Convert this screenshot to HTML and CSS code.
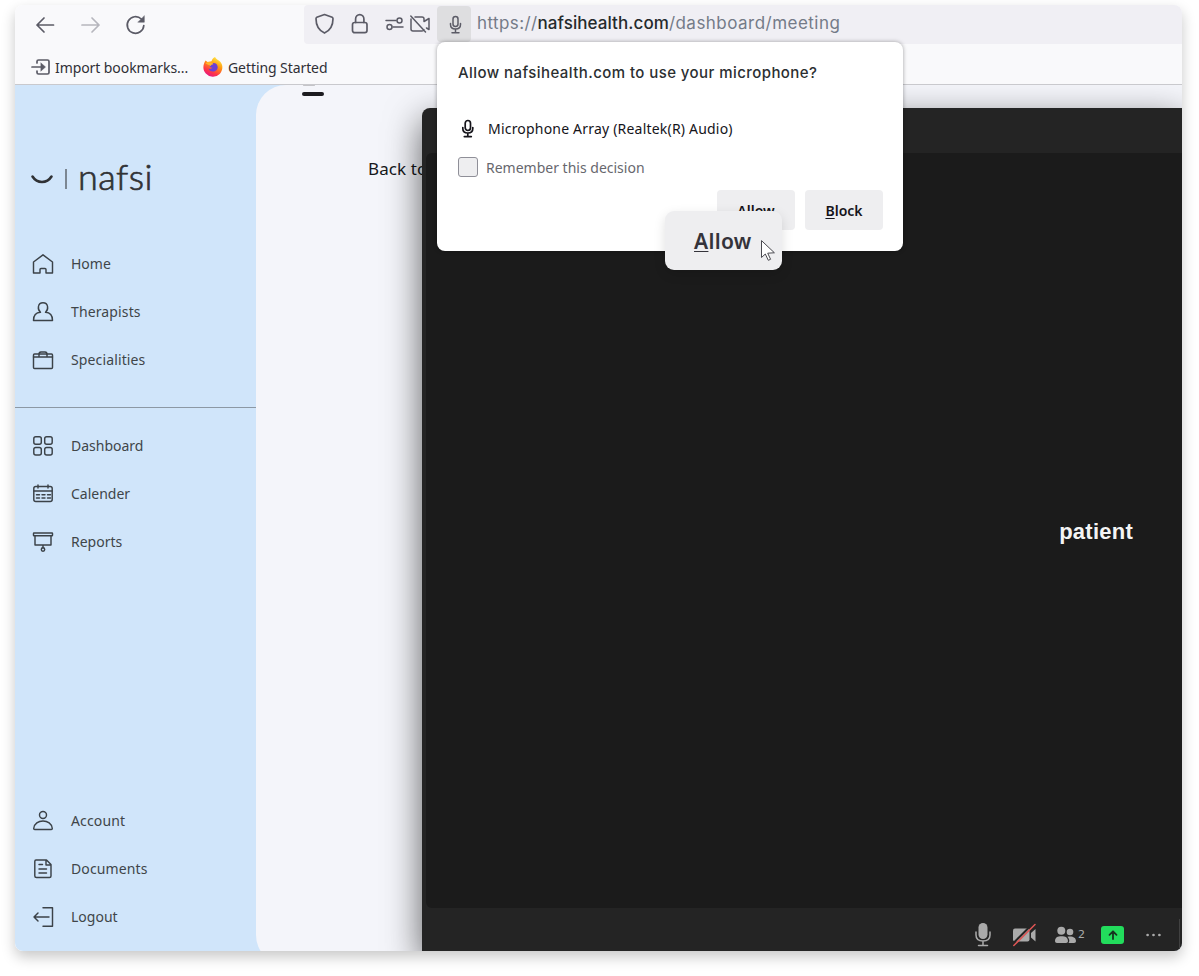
FILE: index.html
```html
<!DOCTYPE html>
<html lang="en">
<head>
<meta charset="utf-8">
<title>Nafsi – Meeting</title>
<link rel="stylesheet" href="styles.css">
</head>
<body>
<div class="window">
  <header class="navbar">
    <div class="nav-buttons">
      <svg width="20" height="20" viewBox="0 0 20 20"><path d="M18.500 10H2M9 3L2 10l7 7" /></svg>
      <svg class="disabled" width="20" height="20" viewBox="0 0 20 20"><path d="M2 10h17M12 3l7 7-7 7" /></svg>
      <svg width="20" height="20" viewBox="0 0 20 20"><path d="M18.800 10.500A8.300 8.300 0 1 1 16.300 4" /><path class="solid" d="M19.300 1v6.200h-6.200z" /></svg>
    </div>
    <div class="urlbar">
      <div class="url-icons">
        <svg class="i-shield" width="20" height="22" viewBox="0 0 20 22"><path d="M10.500 1.500l7.700 2.800q.8.400.8 1.500c0 7-2.800 11.700-8.500 14.300C4.800 17.500 2 12.800 2 5.800q0-1.100.8-1.500z" /></svg>
        <svg class="i-lock" width="18" height="22" viewBox="0 0 18 22"><rect x="1.500" y="9.500" width="14.500" height="10.200" rx="2.200" /><path d="M4.600 9.500V6a4.150 4.400 0 0 1 8.300 0v3.500" /></svg>
        <svg class="i-perm" width="20" height="16" viewBox="0 0 20 16"><path d="M1 4.500h10M8 11H18" /><circle cx="14.500" cy="4.500" r="2.500" /><circle cx="4.500" cy="11" r="2.500" /></svg>
        <svg class="i-cam" width="20" height="18" viewBox="0 0 20 18"><path d="M5 2h7q2 0 2 2v2.500l5-3v11L16.500 13M1 4v10q0 2 2 2H12q1.500 0 2-1.300M.8 1L15.500 17" /></svg>
      </div>
      <div class="mic-tab">
        <svg width="14" height="20" viewBox="0 0 14 20"><rect x="5" y="1.500" width="5" height="10" rx="2.500" /><path d="M2.500 8.500V9.500q0 4.500 5 4.500t5-4.500V8.500M7.500 14v3.500M4 17.800h7" /></svg>
      </div>
      <div class="url"><span class="u1">https://</span><b>nafsihealth.com</b><span class="u2">/dashboard/meeting</span></div>
    </div>
  </header>
  <div class="bookmarks">
    <svg class="i-import" width="19" height="18" viewBox="0 0 19 18"><path d="M5 5V3.500Q5 2 6.500 2h9Q17 2 17 3.500v11q0 1.500-1.500 1.500h-9Q5 16 5 14.500v-1.500M0 9h10" /><path class="solid" d="M9 5l4.500 4-4.500 4z" /></svg>
    <span class="bm1">Import bookmarks...</span>
    <svg class="i-fox" width="20" height="20" viewBox="0 0 20 20">
      <defs><linearGradient id="fox" x1=".8" y1="0" x2=".3" y2="1"><stop offset="0" stop-color="#fff44f" /><stop offset=".4" stop-color="#ff980e" /><stop offset=".75" stop-color="#ff3647" /><stop offset="1" stop-color="#e31587" /></linearGradient></defs>
      <path fill="url(#fox)" d="M12 0c1 2.500 4 3.300 5.500 5 3 3.500 2.200 9-.8 12a9.500 9.500 0 0 1-13.900-.5C-.5 13-.2 7.500 2.600 3.500L4.500 5l4-.8c.5-1.900 1.600-3.200 3.500-4.200z" />
      <path fill="#6b3fd6" d="M6.500 7.500L9.500 6c3-.5 5 1.200 5.200 4 0 2.800-2.200 4.500-4.700 4.500-2.300 0-4-1.300-4.500-3 1.500.8 3 .3 4-.8-1.700.3-3-.7-3-3.200z" />
      <path fill="#ffb52a" d="M2.500 6.500C4 4.800 6.500 4.600 8.200 5.500c1.300.4 2 .9 2.200 1.700-1.300.2-2.600.8-2.700 1.800z" />
    </svg>
    <span class="bm2">Getting Started</span>
  </div>

  <div class="page">
    <aside class="sidebar">
      <div class="logo">
        <svg width="22" height="11" viewBox="0 0 22 11"><path d="M1.500 2.500Q5 8 11 8t9.500-5.500" /></svg>
        <i></i><span>nafsi</span>
      </div>
      <nav class="menu first">
        <a><svg viewBox="0 0 22 22"><path d="M1.500 9L11 1.800 20.500 9v11H14v-3.500q0-1-1-1H9q-1 0-1 1V20H1.500z" /></svg><span>Home</span></a>
        <a><svg viewBox="0 0 22 22"><path d="M8.500 11.300C5.200 8.500 5.500 1.800 11 1.800s5.800 6.700 2.500 9.500c4 .2 7 2.500 7 8.200h-19c0-5.700 3-8 7-8.200z" /></svg><span class="wide">Therapists</span></a>
        <a><svg viewBox="0 0 22 22"><rect x="1.500" y="5" width="19" height="14.500" rx="1" /><path d="M1.500 8h19M7 7V5.500q0-2.500 2-2.500h4q2 0 2 2.500V7" /></svg><span class="wide">Specialities</span></a>
      </nav>
      <nav class="menu second">
        <a><svg viewBox="0 0 22 22"><rect x="1.800" y="1.800" width="7.500" height="7.500" rx="2" /><rect x="12.700" y="1.800" width="7.500" height="7.500" rx="2" /><rect x="1.800" y="12.500" width="7.500" height="7.500" rx="2" /><rect x="12.700" y="12.500" width="7.500" height="7.500" rx="2" /></svg><span>Dashboard</span></a>
        <a><svg viewBox="0 0 22 22"><rect x="1.800" y="3.500" width="18.400" height="15" rx="2" /><path d="M2 8h18M6 2v3M16 2v3" /><path stroke-dasharray="3 2.500" d="M4.500 11.700h14M4.500 15h14" /></svg><span>Calender</span></a>
        <a><svg viewBox="0 0 22 22"><rect x="1.500" y="2" width="19" height="2.800" rx=".5" /><path d="M3 5v9h16V5M11 14v3" /><circle cx="11" cy="18.500" r="1.700" /></svg><span>Reports</span></a>
      </nav>
      <nav class="menu last">
        <a><svg viewBox="0 0 22 22"><circle cx="11" cy="5" r="3.500" /><path d="M1.700 18.500C2.500 8.500 19.500 8.500 20.300 18.500q0 1-1 1H2.700q-1 0-1-1z" /></svg><span class="wide">Account</span></a>
        <a><svg viewBox="0 0 22 22"><path d="M4 2h10.500L19 6.500V18q0 1.500-1.500 1.500h-13Q2.800 19.500 2.800 18V3.500Q2.800 2 4 2zM14 2v5h5M7 6.500h3.500M7 11h7.500M7 15h7.500" /></svg><span class="wide">Documents</span></a>
        <a><svg viewBox="0 0 22 22"><path d="M11 1.800h9.500v18.400H11M17 11H2M6 7L2 11l4 4" /></svg><span>Logout</span></a>
      </nav>
    </aside>
    <main class="content">
      <div class="burger"><i></i><i></i></div>
      <div class="back">Back to</div>
    </main>
    <section class="meeting">
      <div class="stage"><span>patient</span></div>
      <div class="controls">
        <svg width="16" height="24" viewBox="0 0 16 24"><rect x="3.500" y="0" width="9" height="16" rx="4.500" /><path class="line" d="M1 9v3q0 6 7 6t7-6V9M8 18v4M3.500 22.500h9" /></svg>
        <svg class="c-cam" width="24" height="24" viewBox="0 0 24 24"><rect x="0" y="5.500" width="16.500" height="13" rx="2" /><path d="M18 10l4.500-4v12.500L18 14.500z" /><path class="gap" d="M0 20.500L20.500 0" /><path class="slash" d="M.8 22.500L22 1.500" /></svg>
        <span class="c-people"><svg width="23" height="18" viewBox="0 0 23 18"><circle cx="7.300" cy="4.700" r="4" /><circle cx="16" cy="6" r="3.300" /><path d="M1 15.200c0-3.700 2.500-5 6.500-5s6.500 1.300 6.500 5q0 1.800-2 1.800H3q-2 0-2-1.800zM13.500 10.700c5-.8 8.500.7 8.500 4.500q0 1.800-2 1.800h-5.500q2-3-1-6.300z" /></svg><em>2</em></span>
        <span class="share"><svg width="10" height="10" viewBox="0 0 10 10"><path d="M5 9V1.500M1.500 4.800L5 1.300 8.500 4.800" /></svg></span>
        <svg class="dots" width="15" height="4" viewBox="0 0 15 4"><circle cx="1.600" cy="2" r="1.350" /><circle cx="7.500" cy="2" r="1.350" /><circle cx="13.400" cy="2" r="1.350" /></svg>
        <i class="edge"></i>
      </div>
    </section>
  </div>

  <div class="popup">
    <h1><span>Allow nafsihealth.com to use your microphone?</span></h1>
    <div class="device">
      <svg width="14" height="20" viewBox="0 0 14 20"><rect x="4.200" y="1.500" width="5.300" height="10" rx="2.650" /><path d="M1.800 8.500V9.500q0 4.500 5 4.500t5-4.500V8.500M6.800 14v3.500M3.300 17.600h7" /></svg>
      <span class="dev">Microphone Array (Realtek(R) Audio)</span>
    </div>
    <label class="remember"><i></i><span>Remember this decision</span></label>
    <div class="actions"><button><u>A</u>llow</button><button><u>B</u>lock</button></div>
    <div class="callout">
      <span><u>A</u>llow</span>
      <svg width="16" height="22" viewBox="0 0 16 22"><path d="M1.500 1v16.500l3.800-3.500 3 6.300 2.300-1-2.900-6.100 6.300-.4z" /></svg>
    </div>
  </div>
</div>
</body>
</html>
```
FILE: styles.css
```css
* { box-sizing: border-box; }
body { margin: 0; padding: 5px 17px 0 15px; height: 976px; overflow: hidden; background: #fff; font-family: "Noto Sans", sans-serif; }
svg { display: block; flex: none; fill: none; stroke: #5b5b66; stroke-width: 1.7; stroke-linecap: round; stroke-linejoin: round; overflow: visible; }
svg .solid { fill: #5b5b66; stroke-width: .5; }
span, b { white-space: nowrap; }

.window { position: relative; display: flex; flex-direction: column; height: 946px; border-radius: 8px; background: #f9f9fb; overflow: hidden; }
body::before { content: ""; position: absolute; left: 15px; top: 5px; width: 1167px; height: 946px; border-radius: 8px; box-shadow: 0 6px 14px rgba(0,0,0,.22); }

/* Browser chrome */
.navbar { display: flex; height: 39px; flex: none; }
.nav-buttons { display: flex; gap: 25px; width: 289px; padding: 10px 0 0 20px; }
.nav-buttons .disabled { opacity: .42; }
.urlbar { display: flex; flex: 1; background: #f0eff4; border-radius: 4px 0 0 4px; }
.url-icons { display: flex; align-items: center; width: 133px; padding-left: 10px; }
.i-shield { margin-top: -1px; }
.i-lock { margin: -2px 0 0 17px; }
.i-perm { margin: -1px 0 0 16px; stroke-width: 1.5; }
.i-cam { margin: -1px 0 0 5px; stroke-width: 1.5; }
.mic-tab { display: flex; justify-content: center; width: 34px; height: 36px; padding-top: 9px; margin-top: 1px; background: #dedee0; border-radius: 4px; }
.mic-tab svg { margin-left: 1px; stroke-width: 1.5; }
.url { display: flex; padding: 6px 0 0 6px; font: 17px/24px Inter, sans-serif; color: #747b88; }
.u1 { letter-spacing: .4px; }
.u2 { letter-spacing: .47px; }
.url b { font-weight: 500; letter-spacing: .07px; color: #252a2c; }
.bookmarks { display: flex; align-items: center; height: 41px; flex: none; padding: 6px 0 0 17px; border-bottom: 1px solid #c9c9cd; font-size: 14px; letter-spacing: -.08px; color: #303036; }
.bm1 { width: 134px; margin-left: 4px; }
.i-fox { margin-left: 14px; stroke: none; }
.bm2 { margin-left: 5px; }

/* Application */
.page { position: relative; display: flex; flex: 1; min-height: 0; overflow: hidden; background: #d0e5fa; }
.sidebar { display: flex; flex-direction: column; width: 241px; flex: none; color: #404549; }
.logo { display: flex; align-items: center; height: 40px; margin-top: 73px; padding-left: 16px; }
.logo svg { stroke: #303235; stroke-width: 2.6; margin-top: 2px; }
.logo i { width: 2px; height: 20px; margin: 2px 0 0 12px; background: #7c8792; }
.logo span { margin: -4px 0 0 11px; font: 300 36px/40px Lato, sans-serif; letter-spacing: .5px; color: #303235; -webkit-text-stroke: .7px #303235; }
.menu { display: flex; flex-direction: column; gap: 24px; padding-left: 17px; font-size: 14px; line-height: 24px; }
.menu a { display: flex; align-items: center; gap: 17px; height: 24px; }
.menu .wide { letter-spacing: .13px; }
.menu svg { width: 22px; height: 22px; stroke: #3b4248; stroke-width: 1.45; }
.first { margin-top: 54px; padding-bottom: 35px; border-bottom: 1px solid #8c98a4; }
.second { padding-top: 26px; }
.last { margin-top: auto; padding-bottom: 22px; }
.content { flex: 1; height: 880px; padding: 0 0 0 46px; border-radius: 30px 0 0 30px; background: #f4f5fa; }
.burger { display: flex; flex-direction: column; justify-content: space-between; width: 22px; height: 11px; }
.burger i { height: 4px; border-radius: 2px; background: #1c1b1f; }
.burger i:first-child { width: 12px; height: 1px; margin-left: 1px; background: #c4c4c8; }
.back { margin: 61px 0 0 66px; font-size: 17px; line-height: 24px; letter-spacing: .1px; color: #16181a; white-space: nowrap; }
.meeting { position: absolute; left: 407px; top: 23px; right: 0; bottom: 0; display: flex; flex-direction: column; padding: 45px 0 0 4px; border-radius: 8px 0 0 0; background: #242424; box-shadow: 0 12px 36px rgba(0,0,0,.62); }
.stage { display: flex; flex: 1; align-items: center; justify-content: flex-end; padding: 2px 49px 0 0; border-radius: 6px 0 0 6px; background: #1b1b1b; color: #f4f4f4; font: bold 22px/28px "Liberation Sans", Arial, sans-serif; letter-spacing: .25px; }
.controls { display: flex; align-items: center; height: 43px; flex: none; padding: 11px 2px 0 549px; }
.controls svg { fill: #aaa; stroke: none; }
.controls .line { fill: none; stroke: #aaa; stroke-width: 1.5; }
.c-cam { margin-left: 22px; }
.controls .gap { stroke: #242424; stroke-width: 2; }
.controls .slash { stroke: #dd5554; stroke-width: 1.5; }
.c-people { display: flex; margin-left: 17px; }
.c-people em { margin: 2px 0 0 1px; font: 11px/14px "DejaVu Sans", sans-serif; color: #aaa; }
.share { display: flex; align-items: center; justify-content: center; width: 23px; height: 18px; margin-left: 16px; border-radius: 3px; background: #22dc5c; }
.controls .share svg { fill: none; stroke: #16331f; stroke-width: 1.8; }
.dots { margin-left: 22px; }
.edge { width: 1px; height: 32px; margin-left: auto; background: #414141; }

/* Permission prompt, floating over the page */
.popup { position: absolute; left: 422px; top: 37px; width: 466px; height: 209px; padding: 19px 20px 20px 21px; border-radius: 8px; background: #fff; box-shadow: 0 0 4px rgba(0,0,0,.35); }
.popup h1 { margin: 0; font: 500 15px/24px Inter, sans-serif; letter-spacing: .43px; color: #2b2f31; }
.device { display: flex; align-items: center; gap: 13px; height: 24px; margin-top: 31px; padding-left: 3px; font-size: 14px; letter-spacing: .2px; color: #15141a; }
.device svg { stroke: #15141a; margin-top: 1px; }
.remember { display: flex; align-items: center; gap: 8px; height: 22px; margin-top: 16px; font-size: 14px; color: #67676e; }
.remember i { width: 20px; height: 20px; border: 1px solid #8f8f98; border-radius: 3px; background: #eeeef0; }
.actions { display: flex; justify-content: flex-end; gap: 10px; margin-top: 12px; }
.actions button { width: 78px; height: 40px; padding: 2px 0 0; border: 0; border-radius: 4px; background: #eeeef0; color: #15141a; font: 600 14px/38px "Noto Sans", sans-serif; }
u { text-underline-offset: 2px; text-decoration-thickness: 1px; }
.callout { position: absolute; left: 228px; top: 169px; display: flex; width: 117px; height: 59px; padding: 15px 0 0 29px; border-radius: 9px; background: #eeeef0; box-shadow: 0 4px 12px rgba(0,0,0,.13); font: 600 21px/30px "Noto Sans", sans-serif; letter-spacing: .3px; color: #34333a; }
.callout svg { position: absolute; left: 95px; top: 29px; fill: #fff; stroke: #4a4a50; stroke-width: 1; }
```
